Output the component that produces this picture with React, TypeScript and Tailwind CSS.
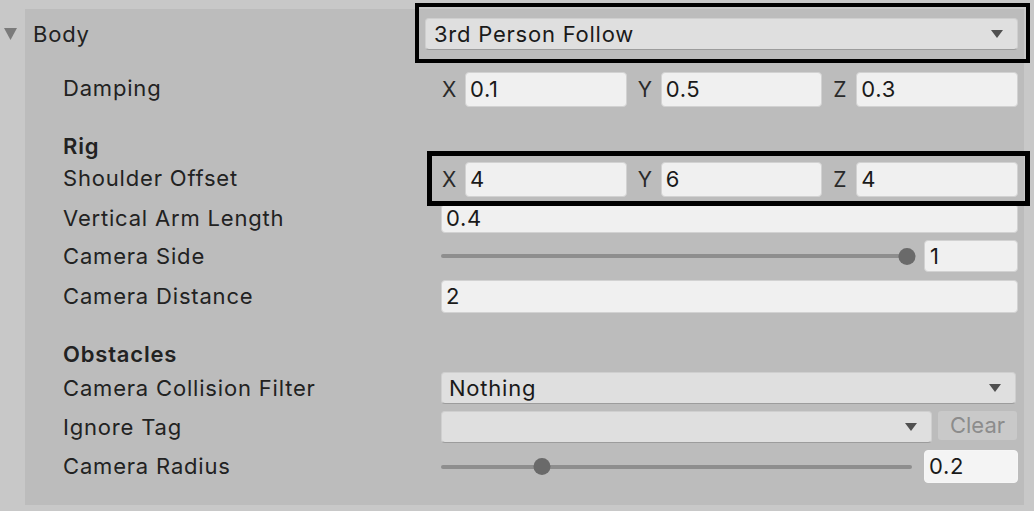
import type { ReactNode } from "react";

function Arrow({ className = "" }: { className?: string }) {
  return (
    <svg width="12" height="8" viewBox="0 0 12 8" className={className}>
      <path d="M0 0 L12 0 L6 8 Z" fill="#505050" />
    </svg>
  );
}

function Field({ value, className = "" }: { value: string; className?: string }) {
  return (
    <div
      className={`flex items-center rounded-[4px] border border-[#d2d2d2] bg-[#f0f0f0] pl-[4px] text-[22px] tracking-[0.03em] text-[#1a1a1a] ${className}`}
    >
      {value}
    </div>
  );
}

function Dropdown({ value, className = "" }: { value: string; className?: string }) {
  return (
    <div
      className={`flex items-center justify-between rounded-[4px] border border-[#cfcfcf] border-b-[#9c9c9c] bg-[#dfdfdf] pl-[7px] pr-[14px] text-[22px] tracking-[0.035em] text-[#1a1a1a] ${className}`}
    >
      <span>{value}</span>
      <Arrow />
    </div>
  );
}

function Slider({ pct }: { pct: number }) {
  return (
    <div className="relative flex h-full flex-1 items-center">
      <div className="h-[4px] w-full rounded-full bg-[#8e8e8e]" />
      <div
        className="absolute h-[17px] w-[17px] -translate-x-1/2 rounded-full bg-[#6a6a6a]"
        style={{ left: `${pct}%` }}
      />
    </div>
  );
}

function Row({
  label,
  children,
  className = "",
  bold = false,
}: {
  label: string;
  children?: ReactNode;
  className?: string;
  bold?: boolean;
}) {
  return (
    <div className={`flex items-center ${className}`}>
      <div
        className={`w-[378px] shrink-0 whitespace-nowrap text-[22px] tracking-[0.037em] text-[#222] ${bold ? "font-semibold" : ""}`}
      >
        {label}
      </div>
      <div className="flex h-full flex-1 items-center">{children}</div>
    </div>
  );
}

function Vec3({ x, y, z }: { x: string; y: string; z: string }) {
  return (
    <div className="grid h-full w-full grid-cols-3 gap-[10px]">
      {[
        ["X", x],
        ["Y", y],
        ["Z", z],
      ].map(([k, v]) => (
        <div key={k} className="flex h-full items-center">
          <span className="w-[24px] shrink-0 pl-[1px] text-[21px] text-[#2a2a2a]">{k}</span>
          <Field value={v} className="h-full flex-1" />
        </div>
      ))}
    </div>
  );
}

export default function App() {
  return (
    <div
      className="relative h-[511px] w-[1034px] overflow-hidden bg-[#c8c8c8]"
      style={{ fontFamily: "Inter, 'Noto Sans', sans-serif" }}
    >
      <div className="ml-[25px] mt-[9px] flex h-[496px] w-[999px] flex-col bg-[#bcbcbc] pl-[38px] pr-[6px]">
        {/* header row */}
        <div className="-ml-[63px] mt-[9px] flex h-[32px] items-center">
          <svg width="13" height="12" viewBox="0 0 13 12" className="ml-[4px]">
            <path d="M0 0 L13 0 L6.5 12 Z" fill="#7b7b7b" />
          </svg>
          <span className="ml-[16px] w-[392px] text-[22px] tracking-[0.037em] text-[#222]">Body</span>
          <Dropdown value="3rd Person Follow" className="h-[32px] flex-1 pl-[8px]" />
        </div>

        <Row label="Damping" className="mt-[22px] h-[32px]">
          <Vec3 x="0.1" y="0.5" z="0.3" />
        </Row>

        <Row label="Rig" bold className="mt-[28px] h-[28px]" />

        <Row label="Shoulder Offset" className="mt-[2px] h-[33px]">
          <Vec3 x="4" y="6" z="4" />
        </Row>

        <Row label="Vertical Arm Length" className="mt-[9px] h-[29px]">
          <Field value="0.4" className="h-full w-full" />
        </Row>

        <Row label="Camera Side" className="mt-[7px] h-[32px]">
          <div className="flex h-full flex-1 pr-[12px]">
            <Slider pct={99} />
          </div>
          <Field value="1" className="h-full w-[94px] pl-[5px]" />
        </Row>

        <Row label="Camera Distance" className="mt-[8px] h-[33px]">
          <Field value="2" className="h-full w-full" />
        </Row>

        <Row label="Obstacles" bold className="mt-[27px] h-[28px]" />

        <Row label="Camera Collision Filter" className="mt-[4px] h-[32px]">
          <Dropdown value="Nothing" className="mr-[2px] h-full w-full" />
        </Row>

        <Row label="Ignore Tag" className="mt-[7px] h-[32px]">
          <Dropdown value="" className="h-full flex-1" />
          <div className="ml-[6px] mr-[1px] flex h-[29px] w-[79px] items-center justify-center self-start rounded-[3px] bg-[#c9c9c9] text-[22px] text-[#8c8c8c]">
            Clear
          </div>
        </Row>

        <Row label="Camera Radius" className="mt-[7px] h-[33px]">
          <div className="flex h-full flex-1 pr-[12px]">
            <Slider pct={21.5} />
          </div>
          <Field value="0.2" className="h-full w-[94px] border-[#f6f6f6] bg-[#f4f4f4]" />
        </Row>
      </div>

      {/* annotation outlines */}
      <div className="absolute left-[415px] top-[3px] h-[60px] w-[615px] border-[4px] border-black" />
      <div className="absolute left-[427px] top-[151px] h-[55px] w-[603px] border-[5px] border-black" />
    </div>
  );
}
